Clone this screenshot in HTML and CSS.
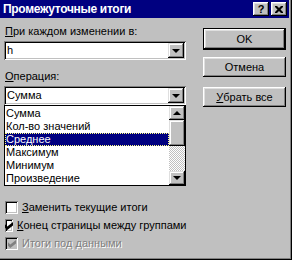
FILE: index.html
```html
<!DOCTYPE html>
<html lang="ru">
<head>
  <meta charset="UTF-8" />
  <title>Промежуточные итоги</title>
  <link rel="stylesheet" href="styles.css">
</head>
<body>
  <div class="dialog">
    <div class="titlebar">
      <span class="title">Промежуточные итоги</span>
      <div class="caption-btns">
        <span class="cap-btn help">?</span>
        <span class="cap-btn close">
          <svg width="8" height="7" viewBox="0 0 8 7"><path d="M0 0h2l2 2 2-2h2v1l-2.5 2.5 2.5 2.5v1h-2l-2-2-2 2h-2v-1l2.5-2.5-2.5-2.5z" fill="#000"/></svg>
        </span>
      </div>
    </div>

    <div class="content">
      <div class="left">
        <div class="lbl first"><u>П</u>ри каждом изменении в:</div>
        <div class="combo">
          <span class="combo-text">h</span>
          <span class="sb-btn"><span class="arrow down"></span></span>
        </div>

        <div class="lbl op"><u>О</u>перация:</div>
        <div class="combo">
          <span class="combo-text">Сумма</span>
          <span class="sb-btn"><span class="arrow down"></span></span>
        </div>

        <div class="listbox">
          <ul class="items">
            <li>Сумма</li>
            <li>Кол-во значений</li>
            <li class="selected">Среднее</li>
            <li>Максимум</li>
            <li>Минимум</li>
            <li>Произведение</li>
          </ul>
          <div class="scrollbar">
            <span class="sb-btn"><span class="arrow up"></span></span>
            <span class="thumb"></span>
            <span class="track"></span>
            <span class="sb-btn"><span class="arrow down"></span></span>
          </div>
        </div>

        <div class="checks">
          <div class="check"><span class="box"></span><span><u>З</u>аменить текущие итоги</span></div>
          <div class="check"><span class="box"><svg width="8" height="8" viewBox="0 0 7 7"><path d="M0 2L2 4L7 0V3L2 7L0 5Z" fill="#000"/></svg></span><span><u>К</u>онец страницы между группами</span></div>
          <div class="check disabled"><span class="box"><svg width="8" height="8" viewBox="0 0 7 7"><path d="M0 2L2 4L7 0V3L2 7L0 5Z" fill="#808080"/></svg></span><span>Итоги под данными</span></div>
        </div>
      </div>

      <div class="right">
        <div class="btn default"><span>OK</span></div>
        <div class="btn cancel">Отмена</div>
        <div class="btn clear"><u>У</u>брать все</div>
      </div>
    </div>
  </div>
</body>
</html>
```

FILE: styles.css
```css
html, body {
  margin: 0;
  padding: 0;
  background: #c0c0c0;
}

.dialog {
  width: 292px;
  height: 260px;
  box-sizing: border-box;
  background: #c0c0c0;
  border-right: 1px solid #000;
  border-bottom: 1px solid #000;
  box-shadow: inset -1px -1px #808080;
  font-family: "Liberation Sans", Arial, sans-serif;
  font-size: 11px;
  color: #000;
  overflow: hidden;
}

/* title bar */
.titlebar {
  height: 18px;
  width: 289px;
  background: #000080;
  display: flex;
  align-items: center;
  justify-content: space-between;
}
.title {
  color: #fff;
  font-weight: bold;
  font-size: 12px;
  letter-spacing: -0.3px;
  padding-left: 3px;
}
.caption-btns {
  display: flex;
  gap: 2px;
  padding-right: 2px;
}
.cap-btn {
  width: 16px;
  height: 14px;
  box-sizing: border-box;
  background: #c0c0c0;
  box-shadow: inset -1px -1px #000, inset 1px 1px #fff, inset -2px -2px #808080, inset 2px 2px #dfdfdf;
  display: flex;
  align-items: center;
  justify-content: center;
  font-weight: bold;
  font-size: 11px;
  line-height: 14px;
}

/* body */
.content {
  display: flex;
  padding-left: 4px;
}
.left {
  width: 182px;
}
.right {
  margin-left: 17px;
  padding-top: 10px;
}

.lbl {
  line-height: 13px;
  padding-left: 1px;
}
.lbl.first {
  margin-top: 7px;
  margin-bottom: 3px;
}
.lbl.op {
  margin-top: 10px;
  margin-bottom: 3px;
}

.combo {
  height: 19px;
  box-sizing: border-box;
  background: #fff;
  box-shadow: inset 1px 1px #808080, inset -1px -1px #fff, inset 2px 2px #000, inset -2px -2px #c0c0c0;
  display: flex;
  align-items: center;
  justify-content: space-between;
  padding: 2px;
}
.combo-text {
  padding-left: 1px;
  line-height: 15px;
}

.sb-btn {
  width: 16px;
  height: 15px;
  box-sizing: border-box;
  background: #c0c0c0;
  box-shadow: inset -1px -1px #000, inset 1px 1px #dfdfdf, inset -2px -2px #808080, inset 2px 2px #fff;
  display: flex;
  align-items: center;
  justify-content: center;
  flex-shrink: 0;
}
.arrow {
  width: 0;
  height: 0;
  border-left: 4px solid transparent;
  border-right: 4px solid transparent;
}
.arrow.down {
  border-top: 4px solid #000;
}
.arrow.up {
  border-bottom: 4px solid #000;
}

/* dropdown list */
.listbox {
  height: 81px;
  box-sizing: border-box;
  border: 1px solid #000;
  background: #fff;
  display: flex;
}
.items {
  list-style: none;
  margin: 0;
  padding: 1px 0 0 0;
  flex: 1;
}
.items li {
  height: 13px;
  line-height: 13px;
  padding-left: 1px;
}
.items li.selected {
  background: #000080;
  color: #fff;
  outline: 1px dotted #ffff80;
  outline-offset: -1px;
}
.scrollbar {
  width: 16px;
  display: flex;
  flex-direction: column;
}
.scrollbar .sb-btn {
  height: 14px;
}
.thumb {
  height: 26px;
  background: #c0c0c0;
  box-shadow: inset -1px -1px #000, inset 1px 1px #dfdfdf, inset -2px -2px #808080, inset 2px 2px #fff;
}
.track {
  flex: 1;
  background-image: repeating-conic-gradient(#c0c0c0 0 25%, #fff 0 50%);
  background-size: 2px 2px;
}

/* checkboxes */
.checks {
  margin-top: 15px;
  display: flex;
  flex-direction: column;
  gap: 5px;
}
.check {
  display: flex;
  align-items: center;
  gap: 4px;
  padding-left: 1px;
  line-height: 13px;
  white-space: nowrap;
}
.box {
  width: 13px;
  height: 13px;
  box-sizing: border-box;
  background: #fff;
  box-shadow: inset 1px 1px #808080, inset -1px -1px #fff, inset 2px 2px #000, inset -2px -2px #c0c0c0;
  display: flex;
  align-items: center;
  justify-content: center;
}
.check.disabled {
  color: #808080;
  text-shadow: 1px 1px #fff;
}
.check.disabled .box {
  background: #c0c0c0;
}

/* buttons */
.btn {
  width: 83px;
  height: 20px;
  box-sizing: border-box;
  background: #c0c0c0;
  box-shadow: inset -1px -1px #000, inset 1px 1px #fff, inset -2px -2px #808080, inset 2px 2px #dfdfdf;
  display: flex;
  align-items: center;
  justify-content: center;
}
.btn.default {
  height: 22px;
  border: 1px solid #000;
}
.btn.cancel {
  margin-top: 7px;
}
.btn.clear {
  margin-top: 10px;
}
```
